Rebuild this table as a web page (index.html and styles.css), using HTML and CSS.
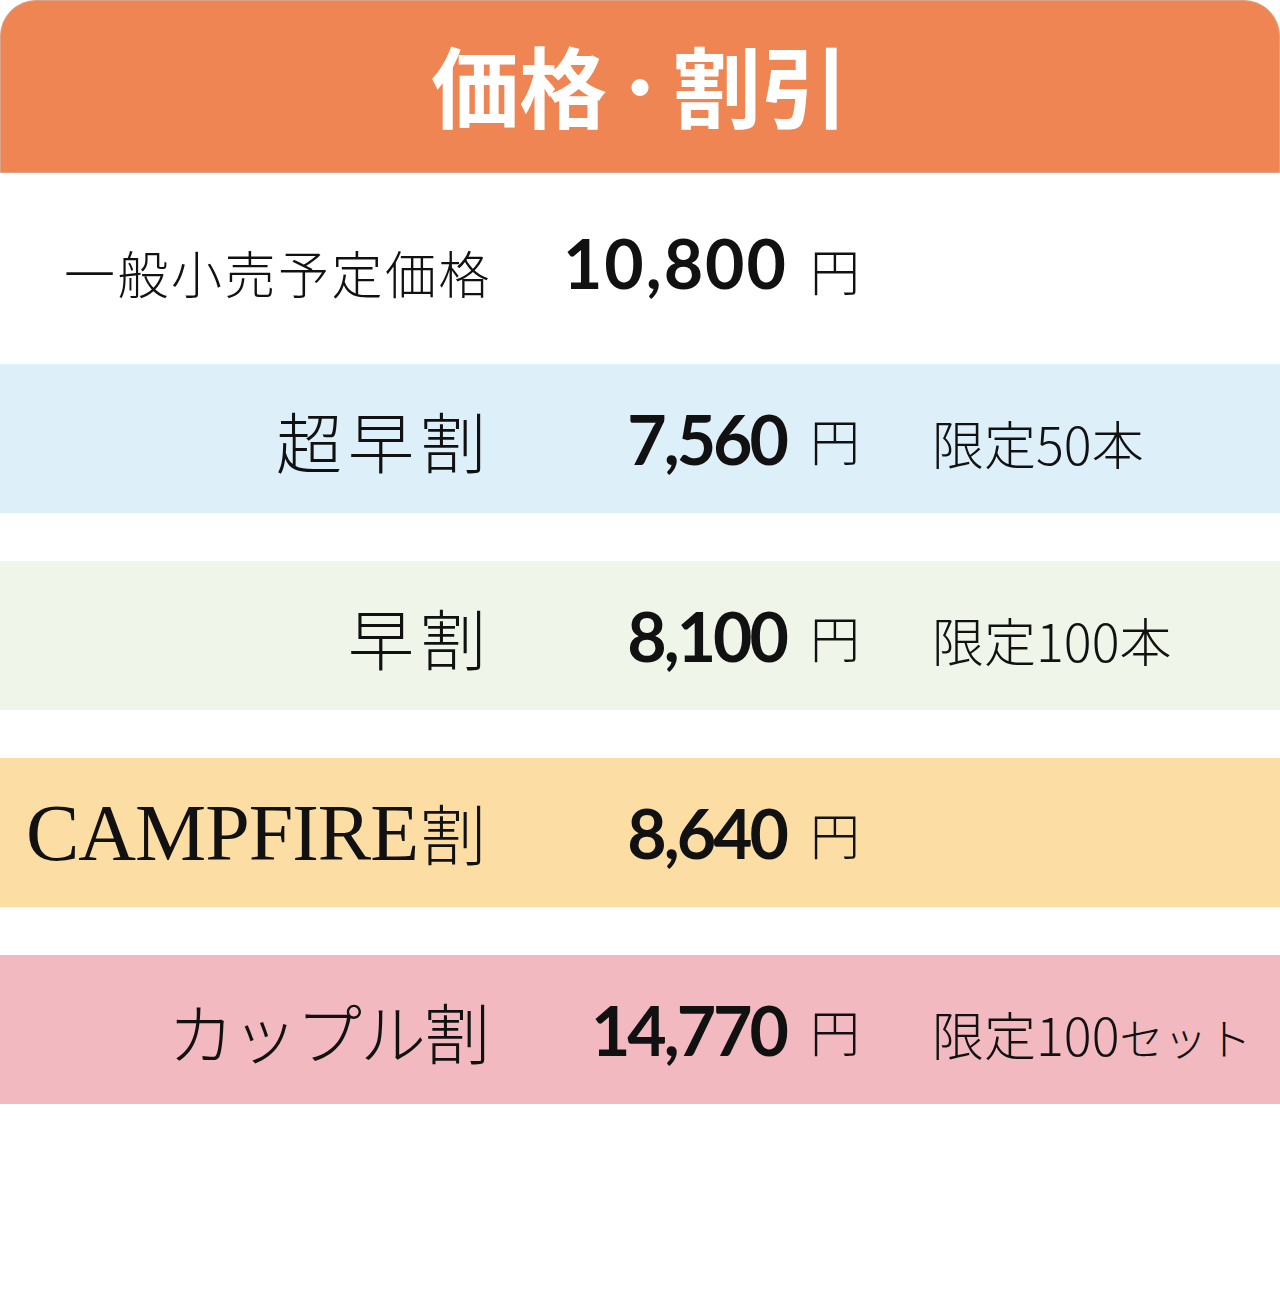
FILE: index.html
```html
<!DOCTYPE html>
<html lang="ja">
<head>
<meta charset="utf-8">
<title>価格・割引</title>
<link rel="stylesheet" href="styles.css">
</head>
<body>
<div class="page">
  <header class="head"><h1 class="title">価格<span class="dot">・</span>割引</h1></header>
  <div class="row row-first">
    <div class="label label-sm">一般小売予定価格</div>
    <div class="price price-wide">10,800</div>
    <div class="yen">円</div>
    <div class="limit"></div>
  </div>
  <div class="row blue">
    <div class="label">超早割</div>
    <div class="price">7,560</div>
    <div class="yen">円</div>
    <div class="limit">限定50本</div>
  </div>
  <div class="row green spaced">
    <div class="label">早割</div>
    <div class="price">8,100</div>
    <div class="yen">円</div>
    <div class="limit">限定100本</div>
  </div>
  <div class="row peach spaced">
    <div class="label"><span class="latin">CAMPFIRE</span>割</div>
    <div class="price">8,640</div>
    <div class="yen">円</div>
    <div class="limit"></div>
  </div>
  <div class="row pink spaced">
    <div class="label label-kana">カップル割</div>
    <div class="price">14,770</div>
    <div class="yen">円</div>
    <div class="limit">限定100<span class="kana-sm">セット</span></div>
  </div>
</div>
</body>
</html>
```

FILE: styles.css
```css
html, body {
  margin: 0;
  padding: 0;
  background: #ffffff;
}
body {
  width: 1280px;
  height: 1306px;
  font-family: "Noto Sans CJK JP", "Noto Sans", sans-serif;
  color: #111111;
}
.page {
  display: flex;
  flex-direction: column;
}
.head {
  height: 171px;
  background: #ef8552;
  border: 1px solid #d9a386;
  border-radius: 36px 36px 0 0;
  display: flex;
  align-items: center;
  justify-content: center;
}
.title {
  margin: 0;
  padding: 0 0 8px 0;
  color: #ffffff;
  font-family: "Noto Sans CJK JP", sans-serif;
  font-weight: 700;
  font-size: 88px;
  line-height: 1;
  letter-spacing: 0px;
}
.dot {
  font-size: 66px;
  vertical-align: 8px;
}
.row {
  display: grid;
  grid-template-columns: 492px 298px 142px 1fr;
  align-items: center;
  height: 149px;
}
.row-first {
  height: 191px;
}
.spaced {
  margin-top: 48px;
}
.blue { background: #ddeff9; }
.green { background: #eff5e8; }
.peach { background: #fcdda4; }
.pink { background: #f3b9c1; }
.label {
  text-align: right;
  font-family: "Noto Sans CJK JP", sans-serif;
  font-weight: 300;
  font-size: 66px;
  letter-spacing: 6px;
  line-height: 1;
  white-space: nowrap;
}
.label-sm {
  font-size: 51px;
  letter-spacing: 2.5px;
  padding-top: 8px;
}
.label-kana {
  letter-spacing: -2px;
  padding-right: 4px;
}
.latin {
  font-family: "Liberation Serif", serif;
  font-weight: 400;
  font-size: 80px;
  letter-spacing: -1px;
  margin-right: 2px;
}
.price {
  text-align: right;
  font-family: Lato, "Noto Sans", sans-serif;
  font-weight: 700;
  font-size: 68px;
  line-height: 1;
  letter-spacing: -3px;
  padding-right: 4px;
}
.price-wide {
  letter-spacing: 2px;
  padding-right: 2px;
  padding-bottom: 12px;
}
.yen {
  padding-left: 20px;
  font-family: "Noto Sans CJK JP", sans-serif;
  font-weight: 300;
  font-size: 50px;
  line-height: 1;
}
.limit {
  font-family: "Noto Sans CJK JP", sans-serif;
  font-weight: 300;
  font-size: 52px;
  line-height: 1;
  white-space: nowrap;
  padding-top: 8px;
}
.kana-sm {
  font-size: 44px;
}
```
